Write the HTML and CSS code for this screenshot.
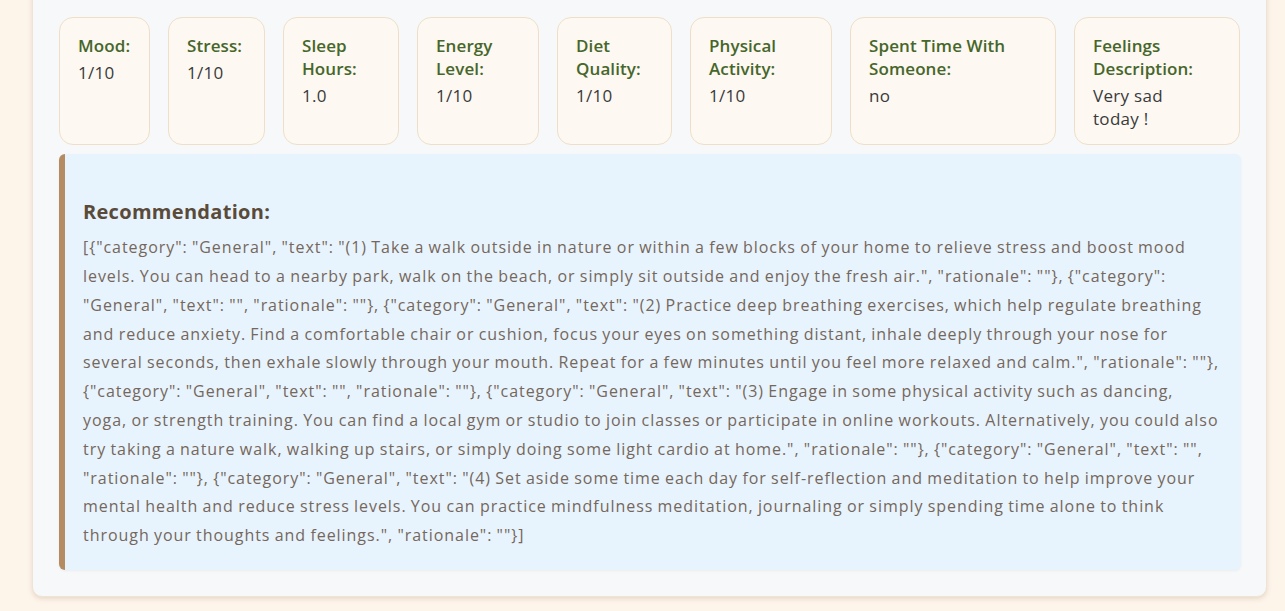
FILE: index.html
```html
<!DOCTYPE html>
<html lang="en">
<head>
<meta charset="utf-8">
<title>Entry</title>
<link rel="stylesheet" href="styles.css">
</head>
<body>
<main class="panel">
  <section class="stats">
    <div class="stat"><div class="label">Mood:</div><div class="value">1/10</div></div>
    <div class="stat"><div class="label">Stress:</div><div class="value">1/10</div></div>
    <div class="stat"><div class="label">Sleep Hours:</div><div class="value">1.0</div></div>
    <div class="stat"><div class="label">Energy Level:</div><div class="value">1/10</div></div>
    <div class="stat"><div class="label">Diet Quality:</div><div class="value">1/10</div></div>
    <div class="stat"><div class="label">Physical Activity:</div><div class="value">1/10</div></div>
    <div class="stat"><div class="label">Spent Time With Someone:</div><div class="value">no</div></div>
    <div class="stat"><div class="label">Feelings Description:</div><div class="value">Very sad today&nbsp;!</div></div>
  </section>
  <section class="reco">
    <h3 class="reco-title">Recommendation:</h3>
    <p class="reco-text">[{"category": "General", "text": "(1) Take a walk outside in nature or within a few blocks of your home to relieve stress and boost mood levels. You can head to a nearby park, walk on the beach, or simply sit outside and enjoy the fresh air.", "rationale": ""}, {"category": "General", "text": "", "rationale": ""}, {"category": "General", "text": "(2) Practice deep breathing exercises, which help regulate breathing and reduce anxiety. Find a comfortable chair or cushion, focus your eyes on something distant, inhale deeply through your nose for several seconds, then exhale slowly through your mouth. Repeat for a few minutes until you feel more relaxed and calm.", "rationale": ""}, {"category": "General", "text": "", "rationale": ""}, {"category": "General", "text": "(3) Engage in some physical activity such as dancing, yoga, or strength training. You can find a local gym or studio to join classes or participate in online workouts. Alternatively, you could also try taking a nature walk, walking up stairs, or simply doing some light cardio at home.", "rationale": ""}, {"category": "General", "text": "", "rationale": ""}, {"category": "General", "text": "(4) Set aside some time each day for self-reflection and meditation to help improve your mental health and reduce stress levels. You can practice mindfulness meditation, journaling or simply spending time alone to think through your thoughts and feelings.", "rationale": ""}]</p>
  </section>
</main>
</body>
</html>
```

FILE: styles.css
```css
html, body {
  margin: 0;
  padding: 0;
}
body {
  background: #fdf4ea;
  font-family: "Open Sans", Lato, sans-serif;
  padding: 0 18px 14px 32px;
  overflow: hidden;
  height: 611px;
  box-sizing: border-box;
  display: flex;
  flex-direction: column;
  justify-content: flex-end;
}
.panel {
  background: #f6f8fa;
  border: 1px solid #efe4d4;
  border-radius: 10px;
  box-shadow: 0 2px 4px rgba(170, 140, 100, 0.25);
  padding: 36px 25px 26px 26px;
}
.stats {
  display: grid;
  grid-template-columns: 91px 97px 116px 122px 115px 142px 206px 166px;
  gap: 18px;
  margin-bottom: 9px;
}
.stat {
  background: #fdf8f2;
  border: 1px solid #efdfc8;
  border-radius: 14px;
  padding: 16px 16px 14px 18px;
  height: 128px;
  box-sizing: border-box;
}
.label {
  color: #46662a;
  font-weight: 600;
  font-size: 17px;
  letter-spacing: 0.1px;
  line-height: 23px;
  margin-bottom: 4px;
}
.value {
  color: #3a3a3a;
  font-size: 17px;
  letter-spacing: 0.3px;
  line-height: 23px;
}
.reco {
  background: #e8f4fd;
  border-left: 6px solid #b58c62;
  border-radius: 6px;
  padding: 44px 22px 20px 18px;
  box-shadow: 0 1px 3px rgba(0, 0, 0, 0.05);
}
.reco-title {
  margin: 0 0 7px 0;
  font-size: 20px;
  letter-spacing: 0.3px;
  line-height: 28px;
  font-weight: 700;
  color: #5a4a3a;
}
.reco-text {
  margin: 0;
  font-size: 16px;
  letter-spacing: 0.95px;
  word-spacing: -0.8px;
  line-height: 28.8px;
  color: #75675c;
}
```
